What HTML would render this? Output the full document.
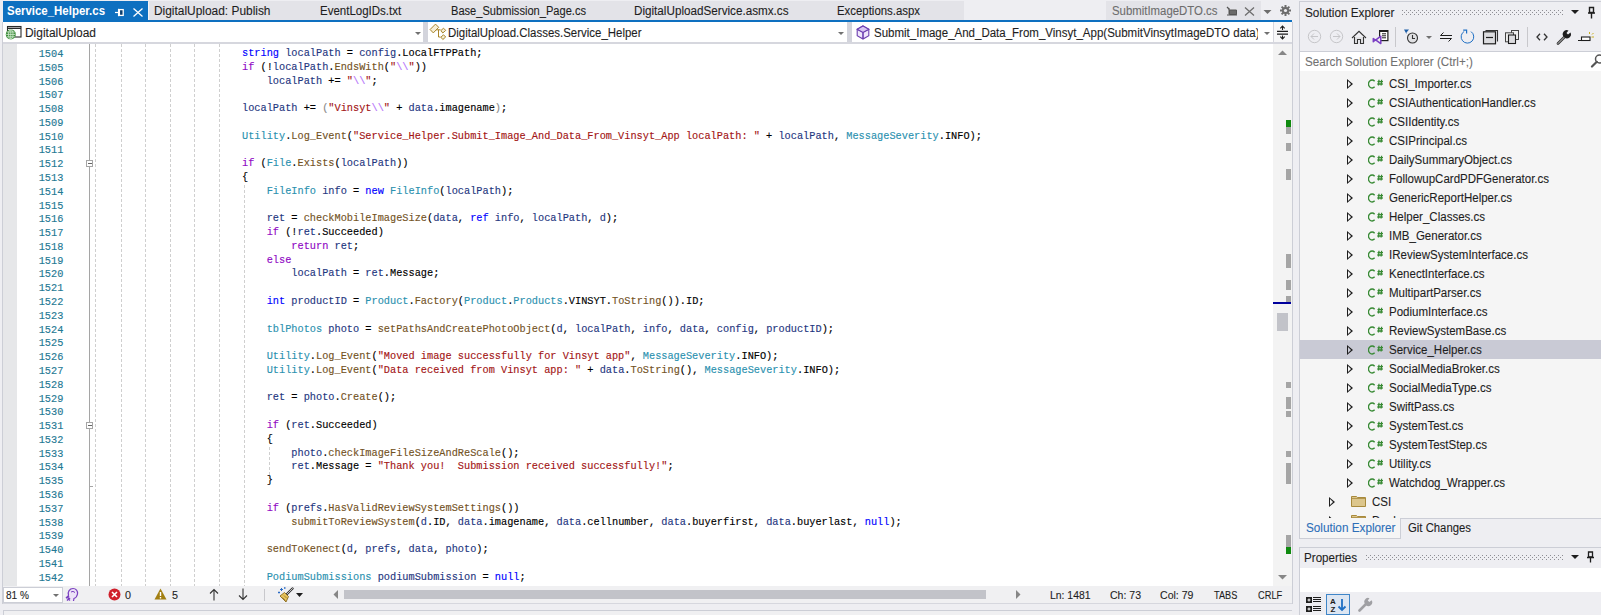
<!DOCTYPE html>
<html><head><meta charset="utf-8">
<style>
*{margin:0;padding:0;box-sizing:border-box}
html,body{width:1601px;height:615px;overflow:hidden;background:#eeeef2;font-family:"Liberation Sans",sans-serif;font-size:12px;color:#1e1e1e}
.a{position:absolute}
.ui{-webkit-text-stroke:0.1px currentColor}
/* tabs */
#tabstrip{position:absolute;left:148px;top:1px;width:816px;height:19px;background:#e3e3e8}
#acttab{position:absolute;left:3px;top:1px;width:145px;height:21px;background:#0e70c0}
#blueline{position:absolute;left:3px;top:20px;width:1289px;height:2px;background:#0e70c0}
.tab{position:absolute;top:4.5px;white-space:nowrap;font-size:12px;line-height:15px;color:#1e1e1e}
#prevtab{position:absolute;left:1106px;top:1px;width:155px;height:19px;background:#e3e3e8}
/* nav bar */
#nav{position:absolute;left:3px;top:22px;width:1289px;height:20px;background:#fff}
#navline{position:absolute;left:3px;top:42px;width:1289px;height:2px;background:#d6d7de}
.sep{position:absolute;top:22px;width:5px;height:20px;background:#d3d4dc}
.navt{position:absolute;top:26px;white-space:nowrap;font-size:12px;line-height:15px;color:#1e1e1e}
.dd{position:absolute;width:0;height:0;border-left:3px solid transparent;border-right:3px solid transparent;border-top:3px solid #717171}
/* editor */
#editor{position:absolute;left:3px;top:44px;width:1270px;height:542px;background:#fff;overflow:hidden}
#selmargin{position:absolute;left:3px;top:44px;width:14px;height:542px;background:#e6e7e9}
#foldline{position:absolute;left:89px;top:44px;width:1px;height:542px;background:#a5a5a5}
.fold{position:absolute;left:86px;width:7px;height:7px;border:1px solid #a5a5a5;background:#fff}
.fold:after{content:"";position:absolute;left:0.5px;top:2px;width:4px;height:1px;background:#666}
.gd{position:absolute;width:1px;background:repeating-linear-gradient(to bottom,#cfcfcf 0,#cfcfcf 3px,transparent 3px,transparent 5px)}
#code{position:absolute;left:93.6px;top:0;width:1180px;height:615px;transform:scaleX(0.9020);transform-origin:0 0}
.ln{position:absolute;left:0;white-space:pre;-webkit-text-stroke:0.15px currentColor;font-family:"Liberation Mono",monospace;font-size:11.4px;line-height:13.8px;color:#000}
#nums{position:absolute;left:0;top:0;width:63.2px;height:615px}
.nm{position:absolute;right:0;-webkit-text-stroke:0.15px currentColor;font-family:"Liberation Mono",monospace;font-size:11.4px;line-height:13.8px;color:#237893;transform:scaleX(0.9020);transform-origin:100% 0}
i{font-style:normal}
i.k{color:#0000ff} i.c{color:#8f08c4} i.t{color:#2b91af} i.m{color:#74531f} i.v{color:#1f377f} i.s{color:#a31515} i.e{color:#b776fb} i.f{color:#8a8a8a}
#vscroll{position:absolute;left:1273px;top:44px;width:19px;height:542px;background:#f3f3f3}
.mk{position:absolute;left:1286px;width:5px;background:#a5a5a5}
/* status */
#status{position:absolute;left:3px;top:586px;width:1289px;height:17px;background:#f0f0f2}
#statusline{position:absolute;left:3px;top:603px;width:1289px;height:1px;background:#d6d7de}
.st{position:absolute;top:588px;white-space:nowrap;font-size:11px;line-height:13px;color:#1e1e1e}
/* solution explorer */
#se{position:absolute;left:1299px;top:1px;width:302px;height:538px;background:#eeeef2;border-left:1px solid #ccced6;border-top:1px solid #ccced6}
#se-search{position:absolute;left:1300px;top:51px;width:301px;height:21px;background:#fff;border-top:1px solid #ccced6;border-bottom:1px solid #ccced6}
#se-tree{position:absolute;left:1300px;top:71px;width:301px;height:447px;background:#f5f5f5;overflow:hidden}
.tr{position:absolute;left:0;width:301px;height:19px}
.tr.sel{background:#c9cad5}
.exp{position:absolute;left:47px;top:5px;width:0;height:0;border-top:5px solid transparent;border-bottom:5px solid transparent;border-left:6px solid #1e1e1e}
.exp:after{content:"";position:absolute;left:-5px;top:-3px;width:0;height:0;border-top:3px solid transparent;border-bottom:3px solid transparent;border-left:3.5px solid #f5f5f5}
.tr.sel .exp:after{border-left-color:#c9cad5}
.cs{position:absolute;left:68px;top:5px}
.tn{position:absolute;left:89px;top:3px;transform:scaleX(0.96);transform-origin:0 0;-webkit-text-stroke:0.1px currentColor;font-size:12px;line-height:15px;color:#1e1e1e;white-space:nowrap}
#props{position:absolute;left:1299px;top:547px;width:302px;height:68px;background:#eeeef2;border-left:1px solid #ccced6;border-top:1px solid #ccced6}
</style></head><body>
<div id="tabstrip"></div>
<div id="prevtab"></div>
<div id="blueline"></div>
<div id="acttab"></div>
<div class="a" style="left:148px;top:2px;width:1px;height:18px;background:#f4f4f6"></div>
<div class="a ui" style="left:7.0px;top:4px;font-size:12.0px;line-height:15px;white-space:nowrap;transform:scaleX(0.9538);transform-origin:0 0;color:#fff;font-weight:bold;-webkit-text-stroke:0">Service_Helper.cs</div>
<svg class="a" style="left:114px;top:8px" width="11" height="9" viewBox="0 0 11 9"><path d="M1 4.5H4.5" stroke="#fff" stroke-width="1.2"/><path d="M4.6 0.8V8.2" stroke="#fff" stroke-width="1.3"/><rect x="5.4" y="1.6" width="3.8" height="5.8" fill="#0a3d6e" stroke="#fff" stroke-width="1.3"/></svg>
<svg class="a" style="left:133px;top:8px" width="10" height="9" viewBox="0 0 10 9"><path d="M0.5 0.5L9.5 8.5M9.5 0.5L0.5 8.5" stroke="#fff" stroke-width="1.3"/></svg>
<div class="a ui" style="left:153.5px;top:4px;font-size:12.0px;line-height:15px;white-space:nowrap;transform:scaleX(0.9923);transform-origin:0 0;color:#1e1e1e">DigitalUpload: Publish</div>
<div class="a ui" style="left:319.5px;top:4px;font-size:12.0px;line-height:15px;white-space:nowrap;transform:scaleX(0.9586);transform-origin:0 0;color:#1e1e1e">EventLogIDs.txt</div>
<div class="a ui" style="left:450.5px;top:4px;font-size:12.0px;line-height:15px;white-space:nowrap;transform:scaleX(0.9241);transform-origin:0 0;color:#1e1e1e">Base_Submission_Page.cs</div>
<div class="a ui" style="left:634.0px;top:4px;font-size:12.0px;line-height:15px;white-space:nowrap;transform:scaleX(0.9734);transform-origin:0 0;color:#1e1e1e">DigitalUploadService.asmx.cs</div>
<div class="a ui" style="left:837.3px;top:4px;font-size:12.0px;line-height:15px;white-space:nowrap;transform:scaleX(0.9498);transform-origin:0 0;color:#1e1e1e">Exceptions.aspx</div>
<div class="a ui" style="left:1111.5px;top:4px;font-size:12.0px;line-height:15px;white-space:nowrap;transform:scaleX(0.9492);transform-origin:0 0;color:#6d6d6d">SubmitImageDTO.cs</div>
<svg class="a" style="left:1226px;top:6px" width="12" height="10" viewBox="0 0 12 10"><path d="M1 1L3.5 3.5" stroke="#555" stroke-width="1.3"/><path d="M3 2.5L3 8.5M3.5 4H10.5V8.5H3.5Z" fill="#6a6a6a" stroke="#555" stroke-width="1"/><path d="M1 9H11" stroke="#555" stroke-width="1"/></svg>
<svg class="a" style="left:1244px;top:7px" width="11" height="9" viewBox="0 0 11 9"><path d="M1 0.5L10 8.5M10 0.5L1 8.5" stroke="#6d6d6d" stroke-width="1.3"/></svg>
<svg class="a" style="left:1263px;top:10px" width="9" height="4" viewBox="0 0 9 4"><path d="M0.5 0H8.5L4.5 4Z" fill="#6d6d6d"/></svg>
<svg class="a" style="left:1280px;top:5px" width="11" height="11" viewBox="0 0 11 11"><g fill="#6d6d6d"><circle cx="5.5" cy="5.5" r="3.6"/><rect x="4.5" y="0" width="2" height="11"/><rect x="0" y="4.5" width="11" height="2"/><rect x="4.5" y="0" width="2" height="11" transform="rotate(45 5.5 5.5)"/><rect x="4.5" y="0" width="2" height="11" transform="rotate(-45 5.5 5.5)"/></g><circle cx="5.5" cy="5.5" r="1.6" fill="#eeeef2"/></svg>

<div id="nav"></div>
<div class="a" style="left:1292px;top:22px;width:1px;height:582px;background:#ccced6"></div>
<div class="a" style="left:2px;top:22px;width:1px;height:582px;background:#ccced6"></div>
<div id="navline"></div>
<div class="sep" style="left:423px"></div>
<div class="sep" style="left:847px"></div>
<div class="a" style="left:1274px;top:22px;width:18px;height:20px;background:#f7f7f8"></div>
<div class="a" style="left:1272px;top:22px;width:2px;height:20px;background:#d6d7de"></div>
<svg class="a" style="left:5px;top:25px" width="17" height="16" viewBox="0 0 17 16"><rect x="2.5" y="1.5" width="13.5" height="10.5" fill="#fff" stroke="#2a2a2a" stroke-width="1.1"/><path d="M2.5 3.3H16" stroke="#2a2a2a" stroke-width="1.4"/><circle cx="5.8" cy="9.4" r="5" fill="#3c8c3a"/><path d="M1.2 9.4H10.4M5.8 4.6V14.2M1.8 7H9.8M1.8 11.8H9.8" stroke="#d8efd5" stroke-width="0.8"/><ellipse cx="5.8" cy="9.4" rx="2.2" ry="4.6" fill="none" stroke="#d8efd5" stroke-width="0.8"/></svg>
<div class="a ui" style="left:24.5px;top:26px;font-size:12.0px;line-height:15px;white-space:nowrap;transform:scaleX(0.9947);transform-origin:0 0;color:#1e1e1e">DigitalUpload</div>
<svg class="a" style="left:429px;top:23px" width="18" height="18" viewBox="0 0 18 18"><path d="M6.5 1.1L9.7 4.3L4.3 9.9L1.1 6.5Z" fill="#f6eed6" stroke="#a8842a" stroke-width="1"/><path d="M7 6.8H11.5M9.5 6.8V14H11.5" fill="none" stroke="#a8842a" stroke-width="1"/><path d="M14.5 5.2L16.7 7.4L13.8 10L11.9 7.6Z" fill="#f6eed6" stroke="#a8842a" stroke-width="1"/><path d="M14.5 11.8L16.7 14L13.8 16.5L11.9 14.2Z" fill="#f6eed6" stroke="#a8842a" stroke-width="1"/></svg>
<div class="a ui" style="left:448.0px;top:26px;font-size:12.0px;line-height:15px;white-space:nowrap;transform:scaleX(0.9543);transform-origin:0 0;color:#1e1e1e">DigitalUpload.Classes.Service_Helper</div>
<svg class="a" style="left:856px;top:25px" width="14" height="15" viewBox="0 0 14 15"><path d="M7 1L12.8 4.2V10.8L7 14L1.2 10.8V4.2Z" fill="#efe6fb" stroke="#6c3fb0" stroke-width="1.1"/><path d="M1.2 4.2L7 7.4L12.8 4.2M7 7.4V14" fill="none" stroke="#6c3fb0" stroke-width="1.1"/><path d="M7 1L12.8 4.2L7 7.4L1.2 4.2Z" fill="#d9c6f3"/><path d="M7 1L12.8 4.2L7 7.4L1.2 4.2Z M7 7.4V14" fill="none" stroke="#6c3fb0" stroke-width="1.1"/></svg>
<div class="a ui" style="left:873.6px;top:26px;font-size:12.0px;line-height:15px;white-space:nowrap;transform:scaleX(0.9584);transform-origin:0 0;color:#1e1e1e">Submit_Image_And_Data_From_Vinsyt_App(SubmitVinsytImageDTO data)</div>
<div class="a" style="left:1258px;top:22px;width:15px;height:20px;background:#fff"></div>
<div class="dd" style="left:415px;top:32px"></div>
<div class="dd" style="left:838px;top:32px"></div>
<div class="dd" style="left:1264px;top:32px"></div>
<svg class="a" style="left:1276px;top:25px" width="13" height="15" viewBox="0 0 13 15"><path d="M1 6.3H12M1 9.2H12" stroke="#1e1e1e" stroke-width="1.3"/><path d="M6.5 1.5V5M6.5 10.5V14" stroke="#1e1e1e" stroke-width="1.1"/><path d="M4.3 3.3L6.5 1.1L8.7 3.3M4.3 11.7L6.5 13.9L8.7 11.7" stroke="#1e1e1e" stroke-width="1.1" fill="none"/></svg>

<div id="editor"></div>
<div id="selmargin"></div>
<div id="foldline"></div>
<div class="fold" style="top:160px"></div>
<div class="fold" style="top:422px"></div>
<div class="a" style="left:90px;top:486px;width:3px;height:1px;background:#a5a5a5"></div>
<div class="gd" style="left:95px;top:44px;height:542px"></div>
<div class="gd" style="left:121px;top:44px;height:542px"></div>
<div class="gd" style="left:145px;top:44px;height:542px"></div>
<div class="gd" style="left:170px;top:44px;height:542px"></div>
<div class="gd" style="left:194px;top:44px;height:542px"></div>
<div class="gd" style="left:219px;top:44px;height:542px"></div>
<div class="gd" style="left:244px;top:185px;height:401px"></div>
<div class="gd" style="left:269px;top:447px;height:28px"></div>
<div id="nums">
<div class="nm" style="top:48px">1504</div>
<div class="nm" style="top:62px">1505</div>
<div class="nm" style="top:76px">1506</div>
<div class="nm" style="top:89px">1507</div>
<div class="nm" style="top:103px">1508</div>
<div class="nm" style="top:117px">1509</div>
<div class="nm" style="top:131px">1510</div>
<div class="nm" style="top:144px">1511</div>
<div class="nm" style="top:158px">1512</div>
<div class="nm" style="top:172px">1513</div>
<div class="nm" style="top:186px">1514</div>
<div class="nm" style="top:200px">1515</div>
<div class="nm" style="top:213px">1516</div>
<div class="nm" style="top:227px">1517</div>
<div class="nm" style="top:241px">1518</div>
<div class="nm" style="top:255px">1519</div>
<div class="nm" style="top:268px">1520</div>
<div class="nm" style="top:282px">1521</div>
<div class="nm" style="top:296px">1522</div>
<div class="nm" style="top:310px">1523</div>
<div class="nm" style="top:324px">1524</div>
<div class="nm" style="top:337px">1525</div>
<div class="nm" style="top:351px">1526</div>
<div class="nm" style="top:365px">1527</div>
<div class="nm" style="top:379px">1528</div>
<div class="nm" style="top:393px">1529</div>
<div class="nm" style="top:406px">1530</div>
<div class="nm" style="top:420px">1531</div>
<div class="nm" style="top:434px">1532</div>
<div class="nm" style="top:448px">1533</div>
<div class="nm" style="top:461px">1534</div>
<div class="nm" style="top:475px">1535</div>
<div class="nm" style="top:489px">1536</div>
<div class="nm" style="top:503px">1537</div>
<div class="nm" style="top:517px">1538</div>
<div class="nm" style="top:530px">1539</div>
<div class="nm" style="top:544px">1540</div>
<div class="nm" style="top:558px">1541</div>
<div class="nm" style="top:572px">1542</div>
</div>
<div id="code">
<div class="ln" style="top:47px">                        <i class="k">string</i> <i class="v">localPath</i> = <i class="v">config</i>.LocalFTPPath;</div>
<div class="ln" style="top:61px">                        <i class="c">if</i> (!<i class="v">localPath</i>.<i class="m">EndsWith</i>(<i class="s">&quot;</i><i class="e">\\</i><i class="s">&quot;</i>))</div>
<div class="ln" style="top:75px">                            <i class="v">localPath</i> += <i class="s">&quot;</i><i class="e">\\</i><i class="s">&quot;</i>;</div>
<div class="ln" style="top:102px">                        <i class="v">localPath</i> += <i class="f">(</i><i class="s">&quot;Vinsyt</i><i class="e">\\</i><i class="s">&quot;</i> + <i class="v">data</i>.imagename<i class="f">)</i>;</div>
<div class="ln" style="top:130px">                        <i class="t">Utility</i>.<i class="m">Log_Event</i>(<i class="s">&quot;Service_Helper.Submit_Image_And_Data_From_Vinsyt_App localPath: &quot;</i> + <i class="v">localPath</i>, <i class="t">MessageSeverity</i>.INFO);</div>
<div class="ln" style="top:157px">                        <i class="c">if</i> (<i class="t">File</i>.<i class="m">Exists</i>(<i class="v">localPath</i>))</div>
<div class="ln" style="top:171px">                        {</div>
<div class="ln" style="top:185px">                            <i class="t">FileInfo</i> <i class="v">info</i> = <i class="k">new</i> <i class="t">FileInfo</i>(<i class="v">localPath</i>);</div>
<div class="ln" style="top:212px">                            <i class="v">ret</i> = <i class="m">checkMobileImageSize</i>(<i class="v">data</i>, <i class="k">ref</i> <i class="v">info</i>, <i class="v">localPath</i>, <i class="v">d</i>);</div>
<div class="ln" style="top:226px">                            <i class="c">if</i> (!<i class="v">ret</i>.Succeeded)</div>
<div class="ln" style="top:240px">                                <i class="c">return</i> <i class="v">ret</i>;</div>
<div class="ln" style="top:254px">                            <i class="c">else</i></div>
<div class="ln" style="top:267px">                                <i class="v">localPath</i> = <i class="v">ret</i>.Message;</div>
<div class="ln" style="top:295px">                            <i class="k">int</i> <i class="v">productID</i> = <i class="t">Product</i>.<i class="m">Factory</i>(<i class="t">Product</i>.<i class="t">Products</i>.VINSYT.<i class="m">ToString</i>()).ID;</div>
<div class="ln" style="top:323px">                            <i class="t">tblPhotos</i> <i class="v">photo</i> = <i class="m">setPathsAndCreatePhotoObject</i>(<i class="v">d</i>, <i class="v">localPath</i>, <i class="v">info</i>, <i class="v">data</i>, <i class="v">config</i>, <i class="v">productID</i>);</div>
<div class="ln" style="top:350px">                            <i class="t">Utility</i>.<i class="m">Log_Event</i>(<i class="s">&quot;Moved image successfully for Vinsyt app&quot;</i>, <i class="t">MessageSeverity</i>.INFO);</div>
<div class="ln" style="top:364px">                            <i class="t">Utility</i>.<i class="m">Log_Event</i>(<i class="s">&quot;Data received from Vinsyt app: &quot;</i> + <i class="v">data</i>.<i class="m">ToString</i>(), <i class="t">MessageSeverity</i>.INFO);</div>
<div class="ln" style="top:391px">                            <i class="v">ret</i> = <i class="v">photo</i>.<i class="m">Create</i>();</div>
<div class="ln" style="top:419px">                            <i class="c">if</i> (<i class="v">ret</i>.Succeeded)</div>
<div class="ln" style="top:433px">                            {</div>
<div class="ln" style="top:447px">                                <i class="v">photo</i>.<i class="m">checkImageFileSizeAndReScale</i>();</div>
<div class="ln" style="top:460px">                                <i class="v">ret</i>.Message = <i class="s">&quot;Thank you!  Submission received successfully!&quot;</i>;</div>
<div class="ln" style="top:474px">                            }</div>
<div class="ln" style="top:502px">                            <i class="c">if</i> (<i class="v">prefs</i>.<i class="m">HasValidReviewSystemSettings</i>())</div>
<div class="ln" style="top:516px">                                <i class="m">submitToReviewSystem</i>(<i class="v">d</i>.ID, <i class="v">data</i>.imagename, <i class="v">data</i>.cellnumber, <i class="v">data</i>.buyerfirst, <i class="v">data</i>.buyerlast, <i class="k">null</i>);</div>
<div class="ln" style="top:543px">                            <i class="m">sendToKenect</i>(<i class="v">d</i>, <i class="v">prefs</i>, <i class="v">data</i>, <i class="v">photo</i>);</div>
<div class="ln" style="top:571px">                            <i class="t">PodiumSubmissions</i> <i class="v">podiumSubmission</i> = <i class="k">null</i>;</div>
</div>
<div id="vscroll"></div>
<svg class="a" style="left:1278px;top:50px" width="9" height="5" viewBox="0 0 9 5"><path d="M0 5H9L4.5 0.5Z" fill="#868686"/></svg>
<svg class="a" style="left:1278px;top:575px" width="9" height="5" viewBox="0 0 9 5"><path d="M0 0H9L4.5 4.5Z" fill="#868686"/></svg>
<div class="mk" style="top:120px;height:7px;background:#0f8a0f"></div>
<div class="mk" style="top:127px;height:7px"></div>
<div class="mk" style="top:143px;height:8px"></div>
<div class="mk" style="top:169px;height:11px"></div>
<div class="mk" style="top:254px;height:14px"></div>
<div class="mk" style="top:280px;height:10px"></div>
<div class="mk" style="top:296px;height:6px"></div>
<div class="a" style="left:1273px;top:302px;width:18px;height:2px;background:#00009c"></div>
<div class="a" style="left:1277px;top:313px;width:11px;height:18px;background:#c2c3c9"></div>
<div class="mk" style="top:382px;height:6px"></div>
<div class="mk" style="top:397px;height:12px"></div>
<div class="mk" style="top:411px;height:6px"></div>
<div class="mk" style="top:451px;height:6px"></div>
<div class="mk" style="top:463px;height:21px"></div>
<div class="mk" style="top:535px;height:13px"></div>
<div class="mk" style="top:547px;height:7px;background:#0f8a0f"></div>

<div id="status"></div>
<div id="statusline"></div>
<div class="a" style="left:3px;top:587px;width:60px;height:16px;background:#fff;border:1px solid #ccced6"></div>
<div class="a ui" style="left:5.5px;top:588px;font-size:10.8px;line-height:15px;white-space:nowrap;transform:scaleX(0.9343);transform-origin:0 0;color:#1e1e1e">81 %</div>
<svg class="a" style="left:53px;top:594px" width="6" height="3" viewBox="0 0 6 3"><path d="M0 0H6L3 3Z" fill="#717171"/></svg>
<svg class="a" style="left:65px;top:587px" width="14" height="15" viewBox="0 0 14 15"><path d="M5 13.5C3 12 2.5 10 3.5 8C2.5 5 4.5 1.5 8 1.5C11 1.5 13 4 12.5 7C12 9.5 10.5 11 9 11.5L8.5 14" fill="#ede3f7" stroke="#7a3fc0" stroke-width="1.2"/><path d="M1 11L4 9M2 13.5L5 11" stroke="#7a3fc0" stroke-width="1.6"/><path d="M6 5Q8 3.5 10 5.5" stroke="#7a3fc0" stroke-width="1" fill="none"/></svg>
<svg class="a" style="left:108px;top:588px" width="13" height="13" viewBox="0 0 13 13"><circle cx="6.5" cy="6.5" r="6" fill="#d0202c"/><path d="M4 4L9 9M9 4L4 9" stroke="#fff" stroke-width="1.6"/></svg>
<div class="a ui" style="left:125.0px;top:588px;font-size:10.8px;line-height:15px;white-space:nowrap;transform:scaleX(0.9989);transform-origin:0 0;color:#1e1e1e">0</div>
<svg class="a" style="left:154px;top:588px" width="13" height="12" viewBox="0 0 13 12"><path d="M6.5 0.5L12.5 11.5H0.5Z" fill="#a27f12"/><path d="M6.5 4V8M6.5 9V10.5" stroke="#fff" stroke-width="1.4"/></svg>
<div class="a ui" style="left:172.0px;top:588px;font-size:10.8px;line-height:15px;white-space:nowrap;transform:scaleX(0.9989);transform-origin:0 0;color:#1e1e1e">5</div>
<svg class="a" style="left:209px;top:588px" width="10" height="13" viewBox="0 0 10 13"><path d="M5 1.5V12.5M1 5.5L5 1.5L9 5.5" stroke="#333" stroke-width="1.1" fill="none"/></svg>
<svg class="a" style="left:238px;top:588px" width="10" height="13" viewBox="0 0 10 13"><path d="M5 0.5V11.5M1 7.5L5 11.5L9 7.5" stroke="#333" stroke-width="1.1" fill="none"/></svg>
<div class="a" style="left:264px;top:589px;width:1px;height:12px;background:#c8c8cc"></div>
<svg class="a" style="left:277px;top:587px" width="20" height="16" viewBox="0 0 20 16"><path d="M10 7L15.5 1.5" stroke="#333" stroke-width="2.4" stroke-linecap="round"/><path d="M10 7L15.5 1.5" stroke="#e9e9e9" stroke-width="0.8" stroke-linecap="round"/><path d="M7.5 5.5L11.5 9.5L9 15L3 9Z" fill="#e6c35c" stroke="#8a6a1e" stroke-width="0.9" stroke-linejoin="round"/><path d="M5.5 10.5L8.5 13.5M7 8.5L9.8 11.3" stroke="#8a6a1e" stroke-width="0.7"/><path d="M3 2.5H6M4.5 1V4M1 5.5H3M2 4.5V6.5M7 1H8.5M7.75 0.3V1.7" stroke="#2a6bc4" stroke-width="1"/></svg>
<svg class="a" style="left:296px;top:593px" width="7" height="4" viewBox="0 0 7 4"><path d="M0 0H7L3.5 4Z" fill="#1e1e1e"/></svg>
<svg class="a" style="left:333px;top:590px" width="5" height="9" viewBox="0 0 5 9"><path d="M5 0V9L0.5 4.5Z" fill="#868686"/></svg>
<div class="a" style="left:344px;top:590px;width:642px;height:9px;background:#c2c3c9"></div>
<svg class="a" style="left:1016px;top:590px" width="5" height="9" viewBox="0 0 5 9"><path d="M0 0V9L4.5 4.5Z" fill="#868686"/></svg>
<div class="a ui" style="left:1049.5px;top:588px;font-size:10.8px;line-height:15px;white-space:nowrap;transform:scaleX(0.9634);transform-origin:0 0;color:#1e1e1e">Ln: 1481</div>
<div class="a ui" style="left:1109.5px;top:588px;font-size:10.8px;line-height:15px;white-space:nowrap;transform:scaleX(0.9742);transform-origin:0 0;color:#1e1e1e">Ch: 73</div>
<div class="a ui" style="left:1160.0px;top:588px;font-size:10.8px;line-height:15px;white-space:nowrap;transform:scaleX(0.9790);transform-origin:0 0;color:#1e1e1e">Col: 79</div>
<div class="a ui" style="left:1213.5px;top:588px;font-size:10.8px;line-height:15px;white-space:nowrap;transform:scaleX(0.8501);transform-origin:0 0;color:#1e1e1e">TABS</div>
<div class="a ui" style="left:1257.6px;top:588px;font-size:10.8px;line-height:15px;white-space:nowrap;transform:scaleX(0.8581);transform-origin:0 0;color:#1e1e1e">CRLF</div>
<div class="a" style="left:3px;top:610px;width:1289px;height:5px;background:#f0f0f2;border-top:1px solid #ccced6;border-left:1px solid #ccced6"></div>

<div id="se"></div>
<div class="a ui" style="left:1304.5px;top:6px;font-size:12.0px;line-height:15px;white-space:nowrap;transform:scaleX(0.9794);transform-origin:0 0;color:#1e1e1e">Solution Explorer</div>
<svg class="a" style="left:1402px;top:10px" width="162" height="5"><defs><pattern id="g1" width="4" height="4" patternUnits="userSpaceOnUse"><rect x="0" y="0" width="1" height="1" fill="#8e8e94"/><rect x="2" y="2" width="1" height="1" fill="#8e8e94"/></pattern></defs><rect width="162" height="5" fill="url(#g1)"/></svg>
<svg class="a" style="left:1571px;top:10px" width="8" height="4" viewBox="0 0 8 4"><path d="M0 0H8L4 4Z" fill="#1e1e1e"/></svg>
<svg class="a" style="left:1587px;top:6px" width="9" height="13" viewBox="0 0 9 13"><path d="M2.5 1.5H6.5V6.5H2.5Z" fill="none" stroke="#1e1e1e" stroke-width="1.4"/><path d="M1 7H8M4.5 7V12.5" stroke="#1e1e1e" stroke-width="1.4"/></svg>
<svg class="a" style="left:1307px;top:29px" width="15" height="15" viewBox="0 0 15 15"><circle cx="7.5" cy="7.5" r="6.2" fill="none" stroke="#c6c6c9" stroke-width="1"/><path d="M4 7.5H11M7 4.5L4 7.5L7 10.5" fill="none" stroke="#c6c6c9" stroke-width="1"/></svg>
<svg class="a" style="left:1329px;top:29px" width="15" height="15" viewBox="0 0 15 15"><circle cx="7.5" cy="7.5" r="6.2" fill="none" stroke="#c6c6c9" stroke-width="1"/><path d="M4 7.5H11M8 4.5L11 7.5L8 10.5" fill="none" stroke="#c6c6c9" stroke-width="1"/></svg>
<svg class="a" style="left:1351px;top:30px" width="16" height="15" viewBox="0 0 16 15"><path d="M3.5 7V13.5H6.5V9.5H9.5V13.5H12.5V7" fill="#e3e3e6" stroke="#333" stroke-width="1.1"/><path d="M1 8L8 1.3L15 8" fill="none" stroke="#333" stroke-width="1.1"/></svg>
<svg class="a" style="left:1372px;top:29px" width="18" height="16" viewBox="0 0 18 16"><rect x="7.6" y="1.6" width="8.3" height="10" fill="#fff" stroke="#1e1e1e" stroke-width="1.2"/><path d="M7.6 2.3H15.9" stroke="#1e1e1e" stroke-width="1.4"/><path d="M10 4.8H14M10 6.8H14M10 8.8H14" stroke="#1e1e1e" stroke-width="1"/><path d="M1.3 9.6L3.6 11.2L8.8 7.2V14.6L3.6 10.8L1.3 12.8Z" fill="#eeeef2" stroke="#7b3fc4" stroke-width="1.5" stroke-linejoin="round"/></svg>
<div class="a" style="left:1395px;top:27px;width:1px;height:20px;background:#c8c8cc"></div>
<svg class="a" style="left:1403px;top:29px" width="16" height="15" viewBox="0 0 16 15"><path d="M1 0.5H6L3.5 3.5V5Z" fill="#1e5fa8"/><circle cx="9.5" cy="9" r="5" fill="#e0e0e3" stroke="#333" stroke-width="1.1"/><path d="M9.5 6V9.5H12" fill="none" stroke="#333" stroke-width="1.1"/></svg>
<svg class="a" style="left:1426px;top:36px" width="6" height="3" viewBox="0 0 6 3"><path d="M0 0H6L3 3Z" fill="#717171"/></svg>
<svg class="a" style="left:1439px;top:31px" width="14" height="12" viewBox="0 0 14 12"><path d="M13 4.5H1.5L4.5 1.5M1 7.5H12.5L9.5 10.5" fill="none" stroke="#1e1e1e" stroke-width="1"/></svg>
<svg class="a" style="left:1460px;top:29px" width="16" height="16" viewBox="0 0 16 16"><path d="M11 2.6A6.3 6.3 0 1 1 4.2 2.4" fill="none" stroke="#1e6fc4" stroke-width="1"/><path d="M3.2 1.2H6.6V4.6" fill="none" stroke="#1e6fc4" stroke-width="1.2"/></svg>
<svg class="a" style="left:1482px;top:29px" width="17" height="16" viewBox="0 0 17 16"><path d="M3.5 1.5H15.5V12.5" fill="none" stroke="#333" stroke-width="1.1"/><rect x="1.5" y="2.8" width="12" height="12" fill="#dcdcdf" stroke="#1e1e1e" stroke-width="1.2"/><path d="M4 8.5H11" stroke="#1e1e1e" stroke-width="1.2"/></svg>
<svg class="a" style="left:1504px;top:29px" width="16" height="16" viewBox="0 0 16 16"><rect x="7.5" y="1.5" width="7" height="9" fill="#eee" stroke="#444" stroke-width="1"/><rect x="1.5" y="3.8" width="8" height="9" fill="#eee" stroke="#444" stroke-width="1"/><rect x="4.5" y="6" width="7" height="8.5" fill="#dcdcdf" stroke="#1e1e1e" stroke-width="1.1"/></svg>
<div class="a" style="left:1527px;top:27px;width:1px;height:20px;background:#c8c8cc"></div>
<svg class="a" style="left:1536px;top:33px" width="12" height="8" viewBox="0 0 12 8"><path d="M4 0.8L1 4L4 7.2M8 0.8L11 4L8 7.2" fill="none" stroke="#333" stroke-width="1.3"/></svg>
<svg class="a" style="left:1556px;top:29px" width="16" height="16" viewBox="0 0 16 16"><path d="M2 14.5L9 7.5" stroke="#333" stroke-width="2.6" stroke-linecap="round"/><path d="M2 14.5L9 7.5" stroke="#ddd" stroke-width="0.9" stroke-linecap="round"/><path d="M8 8A4 4 0 0 1 12.5 1.5L10.5 4L12 5.5L14.5 3.5A4 4 0 0 1 8.5 8.5Z" fill="#1e1e1e"/></svg>
<svg class="a" style="left:1577px;top:31px" width="18" height="11" viewBox="0 0 18 11"><path d="M1 9.5H4.5" stroke="#1e1e1e" stroke-width="1"/><rect x="4.5" y="6" width="8.5" height="3.5" fill="#fff" stroke="#1e1e1e" stroke-width="1.1"/><path d="M12.5 1V3M15 3.5L16.5 2M14.5 6H17" stroke="#c9b020" stroke-width="1"/></svg>
<div id="se-search"></div>
<div class="a ui" style="left:1305.4px;top:55px;font-size:12.0px;line-height:15px;white-space:nowrap;transform:scaleX(0.9695);transform-origin:0 0;color:#717171">Search Solution Explorer (Ctrl+;)</div>
<svg class="a" style="left:1590px;top:54px" width="11" height="14" viewBox="0 0 11 14"><circle cx="9.5" cy="5" r="4" fill="none" stroke="#555" stroke-width="1.5"/><path d="M6.8 7.8L2 12.5" stroke="#555" stroke-width="2.2" stroke-linecap="round"/></svg>
<div id="se-tree">
<div class="tr" style="top:3px"><span class="exp"></span><svg class="cs" width="16" height="10" viewBox="0 0 16 10"><path d="M6.6 2.2A3.5 4 0 1 0 6.6 7.8" fill="none" stroke="#388a34" stroke-width="1.4"/><path d="M9.5 2.6H15M9.3 5H14.8M11 0.8L10.5 6.5M13.6 0.8L13.1 6.5" stroke="#388a34" stroke-width="1.3"/></svg><span class="tn">CSI_Importer.cs</span></div>
<div class="tr" style="top:22px"><span class="exp"></span><svg class="cs" width="16" height="10" viewBox="0 0 16 10"><path d="M6.6 2.2A3.5 4 0 1 0 6.6 7.8" fill="none" stroke="#388a34" stroke-width="1.4"/><path d="M9.5 2.6H15M9.3 5H14.8M11 0.8L10.5 6.5M13.6 0.8L13.1 6.5" stroke="#388a34" stroke-width="1.3"/></svg><span class="tn">CSIAuthenticationHandler.cs</span></div>
<div class="tr" style="top:41px"><span class="exp"></span><svg class="cs" width="16" height="10" viewBox="0 0 16 10"><path d="M6.6 2.2A3.5 4 0 1 0 6.6 7.8" fill="none" stroke="#388a34" stroke-width="1.4"/><path d="M9.5 2.6H15M9.3 5H14.8M11 0.8L10.5 6.5M13.6 0.8L13.1 6.5" stroke="#388a34" stroke-width="1.3"/></svg><span class="tn">CSIIdentity.cs</span></div>
<div class="tr" style="top:60px"><span class="exp"></span><svg class="cs" width="16" height="10" viewBox="0 0 16 10"><path d="M6.6 2.2A3.5 4 0 1 0 6.6 7.8" fill="none" stroke="#388a34" stroke-width="1.4"/><path d="M9.5 2.6H15M9.3 5H14.8M11 0.8L10.5 6.5M13.6 0.8L13.1 6.5" stroke="#388a34" stroke-width="1.3"/></svg><span class="tn">CSIPrincipal.cs</span></div>
<div class="tr" style="top:79px"><span class="exp"></span><svg class="cs" width="16" height="10" viewBox="0 0 16 10"><path d="M6.6 2.2A3.5 4 0 1 0 6.6 7.8" fill="none" stroke="#388a34" stroke-width="1.4"/><path d="M9.5 2.6H15M9.3 5H14.8M11 0.8L10.5 6.5M13.6 0.8L13.1 6.5" stroke="#388a34" stroke-width="1.3"/></svg><span class="tn">DailySummaryObject.cs</span></div>
<div class="tr" style="top:98px"><span class="exp"></span><svg class="cs" width="16" height="10" viewBox="0 0 16 10"><path d="M6.6 2.2A3.5 4 0 1 0 6.6 7.8" fill="none" stroke="#388a34" stroke-width="1.4"/><path d="M9.5 2.6H15M9.3 5H14.8M11 0.8L10.5 6.5M13.6 0.8L13.1 6.5" stroke="#388a34" stroke-width="1.3"/></svg><span class="tn">FollowupCardPDFGenerator.cs</span></div>
<div class="tr" style="top:117px"><span class="exp"></span><svg class="cs" width="16" height="10" viewBox="0 0 16 10"><path d="M6.6 2.2A3.5 4 0 1 0 6.6 7.8" fill="none" stroke="#388a34" stroke-width="1.4"/><path d="M9.5 2.6H15M9.3 5H14.8M11 0.8L10.5 6.5M13.6 0.8L13.1 6.5" stroke="#388a34" stroke-width="1.3"/></svg><span class="tn">GenericReportHelper.cs</span></div>
<div class="tr" style="top:136px"><span class="exp"></span><svg class="cs" width="16" height="10" viewBox="0 0 16 10"><path d="M6.6 2.2A3.5 4 0 1 0 6.6 7.8" fill="none" stroke="#388a34" stroke-width="1.4"/><path d="M9.5 2.6H15M9.3 5H14.8M11 0.8L10.5 6.5M13.6 0.8L13.1 6.5" stroke="#388a34" stroke-width="1.3"/></svg><span class="tn">Helper_Classes.cs</span></div>
<div class="tr" style="top:155px"><span class="exp"></span><svg class="cs" width="16" height="10" viewBox="0 0 16 10"><path d="M6.6 2.2A3.5 4 0 1 0 6.6 7.8" fill="none" stroke="#388a34" stroke-width="1.4"/><path d="M9.5 2.6H15M9.3 5H14.8M11 0.8L10.5 6.5M13.6 0.8L13.1 6.5" stroke="#388a34" stroke-width="1.3"/></svg><span class="tn">IMB_Generator.cs</span></div>
<div class="tr" style="top:174px"><span class="exp"></span><svg class="cs" width="16" height="10" viewBox="0 0 16 10"><path d="M6.6 2.2A3.5 4 0 1 0 6.6 7.8" fill="none" stroke="#388a34" stroke-width="1.4"/><path d="M9.5 2.6H15M9.3 5H14.8M11 0.8L10.5 6.5M13.6 0.8L13.1 6.5" stroke="#388a34" stroke-width="1.3"/></svg><span class="tn">IReviewSystemInterface.cs</span></div>
<div class="tr" style="top:193px"><span class="exp"></span><svg class="cs" width="16" height="10" viewBox="0 0 16 10"><path d="M6.6 2.2A3.5 4 0 1 0 6.6 7.8" fill="none" stroke="#388a34" stroke-width="1.4"/><path d="M9.5 2.6H15M9.3 5H14.8M11 0.8L10.5 6.5M13.6 0.8L13.1 6.5" stroke="#388a34" stroke-width="1.3"/></svg><span class="tn">KenectInterface.cs</span></div>
<div class="tr" style="top:212px"><span class="exp"></span><svg class="cs" width="16" height="10" viewBox="0 0 16 10"><path d="M6.6 2.2A3.5 4 0 1 0 6.6 7.8" fill="none" stroke="#388a34" stroke-width="1.4"/><path d="M9.5 2.6H15M9.3 5H14.8M11 0.8L10.5 6.5M13.6 0.8L13.1 6.5" stroke="#388a34" stroke-width="1.3"/></svg><span class="tn">MultipartParser.cs</span></div>
<div class="tr" style="top:231px"><span class="exp"></span><svg class="cs" width="16" height="10" viewBox="0 0 16 10"><path d="M6.6 2.2A3.5 4 0 1 0 6.6 7.8" fill="none" stroke="#388a34" stroke-width="1.4"/><path d="M9.5 2.6H15M9.3 5H14.8M11 0.8L10.5 6.5M13.6 0.8L13.1 6.5" stroke="#388a34" stroke-width="1.3"/></svg><span class="tn">PodiumInterface.cs</span></div>
<div class="tr" style="top:250px"><span class="exp"></span><svg class="cs" width="16" height="10" viewBox="0 0 16 10"><path d="M6.6 2.2A3.5 4 0 1 0 6.6 7.8" fill="none" stroke="#388a34" stroke-width="1.4"/><path d="M9.5 2.6H15M9.3 5H14.8M11 0.8L10.5 6.5M13.6 0.8L13.1 6.5" stroke="#388a34" stroke-width="1.3"/></svg><span class="tn">ReviewSystemBase.cs</span></div>
<div class="tr sel" style="top:269px"><span class="exp"></span><svg class="cs" width="16" height="10" viewBox="0 0 16 10"><path d="M6.6 2.2A3.5 4 0 1 0 6.6 7.8" fill="none" stroke="#388a34" stroke-width="1.4"/><path d="M9.5 2.6H15M9.3 5H14.8M11 0.8L10.5 6.5M13.6 0.8L13.1 6.5" stroke="#388a34" stroke-width="1.3"/></svg><span class="tn">Service_Helper.cs</span></div>
<div class="tr" style="top:288px"><span class="exp"></span><svg class="cs" width="16" height="10" viewBox="0 0 16 10"><path d="M6.6 2.2A3.5 4 0 1 0 6.6 7.8" fill="none" stroke="#388a34" stroke-width="1.4"/><path d="M9.5 2.6H15M9.3 5H14.8M11 0.8L10.5 6.5M13.6 0.8L13.1 6.5" stroke="#388a34" stroke-width="1.3"/></svg><span class="tn">SocialMediaBroker.cs</span></div>
<div class="tr" style="top:307px"><span class="exp"></span><svg class="cs" width="16" height="10" viewBox="0 0 16 10"><path d="M6.6 2.2A3.5 4 0 1 0 6.6 7.8" fill="none" stroke="#388a34" stroke-width="1.4"/><path d="M9.5 2.6H15M9.3 5H14.8M11 0.8L10.5 6.5M13.6 0.8L13.1 6.5" stroke="#388a34" stroke-width="1.3"/></svg><span class="tn">SocialMediaType.cs</span></div>
<div class="tr" style="top:326px"><span class="exp"></span><svg class="cs" width="16" height="10" viewBox="0 0 16 10"><path d="M6.6 2.2A3.5 4 0 1 0 6.6 7.8" fill="none" stroke="#388a34" stroke-width="1.4"/><path d="M9.5 2.6H15M9.3 5H14.8M11 0.8L10.5 6.5M13.6 0.8L13.1 6.5" stroke="#388a34" stroke-width="1.3"/></svg><span class="tn">SwiftPass.cs</span></div>
<div class="tr" style="top:345px"><span class="exp"></span><svg class="cs" width="16" height="10" viewBox="0 0 16 10"><path d="M6.6 2.2A3.5 4 0 1 0 6.6 7.8" fill="none" stroke="#388a34" stroke-width="1.4"/><path d="M9.5 2.6H15M9.3 5H14.8M11 0.8L10.5 6.5M13.6 0.8L13.1 6.5" stroke="#388a34" stroke-width="1.3"/></svg><span class="tn">SystemTest.cs</span></div>
<div class="tr" style="top:364px"><span class="exp"></span><svg class="cs" width="16" height="10" viewBox="0 0 16 10"><path d="M6.6 2.2A3.5 4 0 1 0 6.6 7.8" fill="none" stroke="#388a34" stroke-width="1.4"/><path d="M9.5 2.6H15M9.3 5H14.8M11 0.8L10.5 6.5M13.6 0.8L13.1 6.5" stroke="#388a34" stroke-width="1.3"/></svg><span class="tn">SystemTestStep.cs</span></div>
<div class="tr" style="top:383px"><span class="exp"></span><svg class="cs" width="16" height="10" viewBox="0 0 16 10"><path d="M6.6 2.2A3.5 4 0 1 0 6.6 7.8" fill="none" stroke="#388a34" stroke-width="1.4"/><path d="M9.5 2.6H15M9.3 5H14.8M11 0.8L10.5 6.5M13.6 0.8L13.1 6.5" stroke="#388a34" stroke-width="1.3"/></svg><span class="tn">Utility.cs</span></div>
<div class="tr" style="top:402px"><span class="exp"></span><svg class="cs" width="16" height="10" viewBox="0 0 16 10"><path d="M6.6 2.2A3.5 4 0 1 0 6.6 7.8" fill="none" stroke="#388a34" stroke-width="1.4"/><path d="M9.5 2.6H15M9.3 5H14.8M11 0.8L10.5 6.5M13.6 0.8L13.1 6.5" stroke="#388a34" stroke-width="1.3"/></svg><span class="tn">Watchdog_Wrapper.cs</span></div>
<div class="tr" style="top:421px"><span class="exp" style="left:29px"></span><svg class="a" style="left:51px;top:3px" width="15" height="12" viewBox="0 0 15 12"><path d="M0.5 1.5H5.5L6.5 2.5H14.5V11.5H0.5Z" fill="#dcc68c" stroke="#a88a3c" stroke-width="1"/><path d="M0.5 3.5H14.5" stroke="#a88a3c" stroke-width="0.8"/></svg><span class="tn" style="left:72px">CSI</span></div>
<div class="tr" style="top:440px"><span class="exp" style="left:29px"></span><svg class="a" style="left:51px;top:3px" width="15" height="12" viewBox="0 0 15 12"><path d="M0.5 1.5H5.5L6.5 2.5H14.5V11.5H0.5Z" fill="#dcc68c" stroke="#a88a3c" stroke-width="1"/><path d="M0.5 3.5H14.5" stroke="#a88a3c" stroke-width="0.8"/></svg><span class="tn" style="left:72px">Dealer</span></div>
</div>
<div class="a" style="left:1300px;top:518px;width:301px;height:21px;background:#eeeef2;border-top:1px solid #ccced6"></div>
<div class="a" style="left:1299px;top:518px;width:102px;height:21px;background:#f5f5f5;border-left:1px solid #ccced6;border-right:1px solid #ccced6;border-bottom:1px solid #ccced6"></div>
<div class="a ui" style="left:1305.6px;top:521px;font-size:12.0px;line-height:15px;white-space:nowrap;transform:scaleX(0.9783);transform-origin:0 0;color:#2d6fb8">Solution Explorer</div>
<div class="a ui" style="left:1407.5px;top:521px;font-size:12.0px;line-height:15px;white-space:nowrap;transform:scaleX(0.9445);transform-origin:0 0;color:#1e1e1e">Git Changes</div>
<div id="props"></div>
<div class="a ui" style="left:1304.0px;top:551px;font-size:12.0px;line-height:15px;white-space:nowrap;transform:scaleX(0.9690);transform-origin:0 0;color:#1e1e1e">Properties</div>
<svg class="a" style="left:1366px;top:555px" width="198" height="5"><defs><pattern id="g2" width="4" height="4" patternUnits="userSpaceOnUse"><rect x="0" y="0" width="1" height="1" fill="#8e8e94"/><rect x="2" y="2" width="1" height="1" fill="#8e8e94"/></pattern></defs><rect width="198" height="5" fill="url(#g2)"/></svg>
<svg class="a" style="left:1571px;top:555px" width="8" height="4" viewBox="0 0 8 4"><path d="M0 0H8L4 4Z" fill="#1e1e1e"/></svg>
<svg class="a" style="left:1587px;top:551px" width="7" height="12" viewBox="0 0 7 12"><path d="M1.5 1H5.5V6H1.5Z" fill="none" stroke="#1e1e1e" stroke-width="1.3"/><path d="M0 6.5H7M3.5 6.5V11.5" stroke="#1e1e1e" stroke-width="1.3"/></svg>
<div class="a" style="left:1300px;top:568px;width:301px;height:24px;background:#fff"></div>
<svg class="a" style="left:1305px;top:596px" width="17" height="17" viewBox="0 0 17 17"><rect x="1" y="1" width="6" height="6" fill="#1e1e1e"/><rect x="1" y="10" width="6" height="6" fill="#1e1e1e"/><path d="M2.5 4H5.5M4 2.5V5.5M2.5 13H5.5M4 11.5V14.5" stroke="#fff" stroke-width="1"/><path d="M8 1.5H16M8 3.5H16M8 5.5H16M8 10.5H16M8 12.5H16M8 14.5H16" stroke="#1e1e1e" stroke-width="1"/></svg>
<div class="a" style="left:1326px;top:594px;width:24px;height:21px;background:#dde6f2;border:1px solid #3f86c8"></div>
<svg class="a" style="left:1330px;top:597px" width="17" height="16" viewBox="0 0 17 16"><text x="0" y="7" font-family="Liberation Sans" font-size="8" font-weight="bold" fill="#1e1e1e">A</text><text x="0.5" y="15" font-family="Liberation Sans" font-size="8" font-weight="bold" fill="#1e1e1e">Z</text><path d="M12 2V13M8.5 9.5L12 13L15.5 9.5" fill="none" stroke="#1e6fc4" stroke-width="1.8"/></svg>
<svg class="a" style="left:1358px;top:597px" width="15" height="15" viewBox="0 0 15 15"><path d="M1.5 13.5L8 7" stroke="#a0a0a4" stroke-width="2.6" stroke-linecap="round"/><path d="M7.5 7.5A3.8 3.8 0 0 1 11.5 1.2L9.8 3.5L11.3 5L13.6 3.3A3.8 3.8 0 0 1 7.9 8.2Z" fill="#a0a0a4"/></svg>
</body></html>
